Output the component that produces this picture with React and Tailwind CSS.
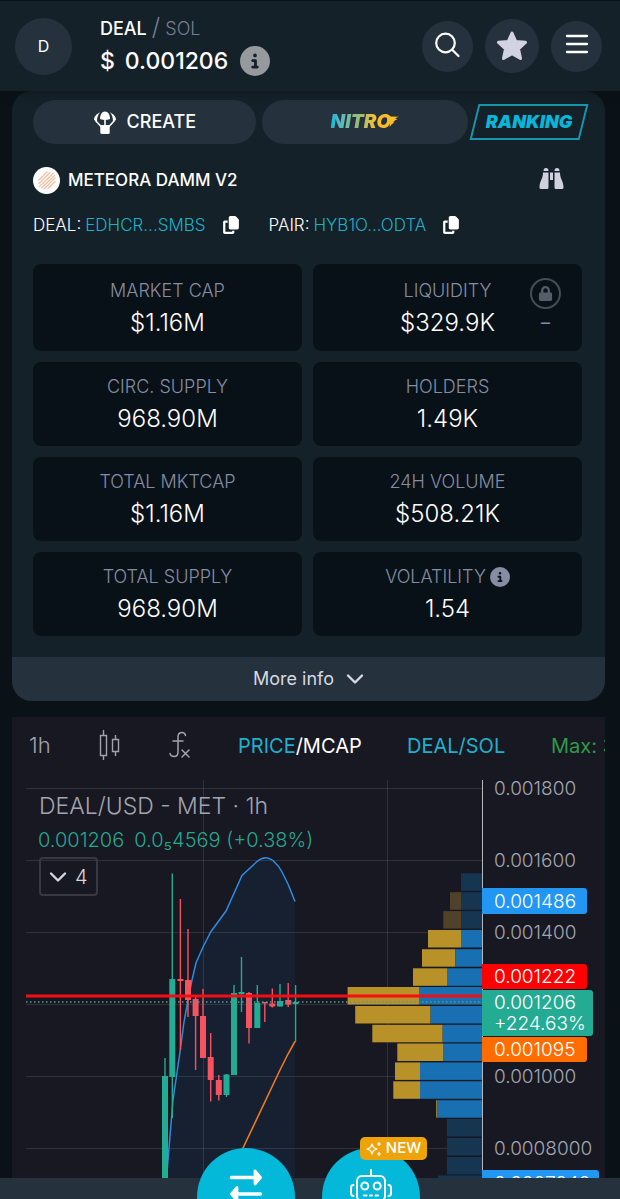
import React from "react";
import { FaLock } from "react-icons/fa";
import { FaCircleInfo, FaCopy } from "react-icons/fa6";

const STATS = [
  { label: "MARKET CAP", value: "$1.16M" },
  { label: "LIQUIDITY", value: "$329.9K", lock: true },
  { label: "CIRC. SUPPLY", value: "968.90M" },
  { label: "HOLDERS", value: "1.49K" },
  { label: "TOTAL MKTCAP", value: "$1.16M" },
  { label: "24H VOLUME", value: "$508.21K" },
  { label: "TOTAL SUPPLY", value: "968.90M" },
  { label: "VOLATILITY", value: "1.54", info: true },
];

// [x, wick top, wick bottom, body top, body bottom, rising]
const CANDLES = [
  [165, 1058, 1178, 1076, 1178, true],
  [172.3, 873.5, 1118, 979, 1077, true],
  [180.4, 899, 1050, 979, 981, false],
  [188, 929, 1017, 980, 1000, false],
  [195.6, 996, 1070, 999, 1016, false],
  [203, 989, 1058, 1016, 1058, false],
  [210.7, 1033, 1101.5, 1057, 1080, false],
  [218.8, 1075, 1100.5, 1080, 1095, false],
  [226.5, 1074, 1097, 1074.5, 1095, true],
  [234, 985, 1075, 993, 1075, true],
  [241.5, 957, 1012, 992, 994, true],
  [249, 992, 1043.5, 993, 1028, false],
  [257.3, 985, 1028, 1003, 1028, true],
  [264.8, 1002, 1022, 1002, 1003.5, false],
  [272.3, 988.5, 1007.5, 1003.5, 1006.5, false],
  [280, 984, 1006.5, 1001, 1006.5, true],
  [288.2, 983, 1007, 1000, 1004.5, false],
  [295.6, 985, 1042, 1002, 1004, true],
];

// [top, gold left, blue left, dimmed]
const PROFILE = [
  [873.3, 461, 461, true],
  [892.2, 450, 461, true],
  [911.1, 443.3, 461, true],
  [930, 428, 461, false],
  [949.2, 422, 455.3, false],
  [968.3, 413, 447, false],
  [987, 347.6, 419, false],
  [1006, 355.2, 430.6, false],
  [1024.8, 372.3, 442.7, false],
  [1043.5, 397.3, 443, false],
  [1062.4, 395, 420, false],
  [1081.3, 393.3, 420, false],
  [1100.2, 436.2, 437.5, false],
  [1119, 447, 447, true],
  [1138, 447, 447, true],
  [1157, 447, 447, true],
  [1175.5, 438, 438, true],
];

const GRID_Y = [788.5, 860.5, 932.5, 1004.5, 1076.5, 1148.5];
const AXIS = [
  [788, "0.001800"],
  [860, "0.001600"],
  [932, "0.001400"],
  [1076, "0.001000"],
  [1148, "0.0008000"],
];
const UPPER =
  "M166.500 1178L168 1160L173 1100L180 1052L184 1022L188 1000L192 980L196 963L203 947L211 931.500L226 911L242 875.500L257 861.500Q265 854.500 273 860.500Q279 866 282 872L288 884L295 901.500";

const GREEN = "#23ab94";
const RED = "#f7525f";

function Parachute() {
  return (
    <svg viewBox="0 0 24 24" className="h-6 w-6" fill="currentColor" aria-hidden="true">
      <path d="M7 9C7 4.500 9 1.500 12 1.500S17 4.500 17 9Q12 11 7 9Z" />
      <path d="M7.200 2.300C3.500 4 1 6.500 1 10L4 11.500C4 7.500 5 4.500 7.200 2.300ZM16.800 2.300C20.500 4 23 6.500 23 10L20 11.500C20 7.500 19 4.500 16.800 2.300Z" />
      <path d="M2.500 10.500L8.500 17M21.500 10.500L15.500 17M12 9.500V16" fill="none" stroke="currentColor" strokeWidth="1.600" />
      <rect x="7.300" y="15" width="9.400" height="9" rx="1.500" />
    </svg>
  );
}

function Chevron() {
  return (
    <svg viewBox="0 0 18 12" className="h-3 w-[18px]" fill="none" stroke="currentColor" strokeWidth="2.400" strokeLinecap="round" strokeLinejoin="round" aria-hidden="true">
      <path d="M2 2.500L9 9.500L16 2.500" />
    </svg>
  );
}

function Binoculars() {
  return (
    <svg viewBox="0 0 25 23" className="h-[23px] w-[25px]" fill="currentColor" aria-hidden="true">
      <path d="M4.500 4Q4.500 1 7 1Q9.500 1 9.500 4ZM15.500 4Q15.500 1 18 1Q20.500 1 20.500 4Z" />
      <path d="M4 5.500H9.500V20.500Q9.500 22 8 22H2Q.5 22 .5 20.500C.5 14 4 12 4 5.500ZM15.500 5.500H21C21 12 24.500 14 24.500 20.500Q24.500 22 23 22H17Q15.500 22 15.500 20.500ZM11 5.500H14V13H11Z" />
    </svg>
  );
}

function Header() {
  return (
    <header className="relative z-10 flex h-[91px] items-center border-t border-[#0b1219] bg-[#152129] pr-[18px] pl-[15px] shadow-[0_2px_8px_#0b121980]">
      <div className="flex h-[57px] w-[57px] shrink-0 items-center justify-center rounded-full bg-[#25323d] text-base">D</div>
      <div className="ml-7 flex-1">
        <div className="text-lg leading-7 font-light text-[#747e92]">
          <span className="font-medium text-white">DEAL</span> <span className="text-2xl leading-7">/</span> SOL
        </div>
        <div className="flex items-center text-[23px] leading-9 font-medium">
          <span className="mr-[10px]">$</span>0.001206
          <button type="button" aria-label="Price details" className="ml-3 text-[#96999e]">
            <FaCircleInfo className="h-[30px] w-[30px]" />
          </button>
        </div>
      </div>
      <div className="flex items-center gap-3">
        <button type="button" aria-label="Search" className="flex h-[51px] w-[51px] items-center justify-center rounded-full bg-[#25323d]">
          <svg viewBox="0 0 28 28" className="h-7 w-7" fill="none" stroke="currentColor" strokeWidth="2.200" strokeLinecap="round">
            <circle cx="11.500" cy="11" r="9.300" />
            <path d="M18.500 18L24.500 24" />
          </svg>
        </button>
        <button type="button" aria-label="Favourite" className="flex h-[54px] w-[54px] items-center justify-center rounded-full bg-[#25323d] text-[#d2d3e2]">
          <svg viewBox="0 0 32 32" className="h-8 w-8" fill="currentColor" stroke="currentColor" strokeWidth="3" strokeLinejoin="round">
            <path d="M16 3L19.800 11.500L29.500 12.300L22.500 18.800L24.500 28.500L16 23.800L7.500 28.500L9.500 18.800L2.500 12.300L12.200 11.500Z" />
          </svg>
        </button>
        <button type="button" aria-label="Menu" className="flex h-[51px] w-[51px] items-center justify-center rounded-full bg-[#25323d]">
          <svg viewBox="0 0 24 24" className="h-6 w-6" stroke="currentColor" strokeWidth="2.300" strokeLinecap="round">
            <path d="M2 2H22M2 10H22M2 18H22" />
          </svg>
        </button>
      </div>
    </header>
  );
}

function Address({ label, value }) {
  return (
    <div className="flex items-center">
      <span>{label}:</span>
      <a href="#address" className="ml-1 text-[#1cb0c7]">{value}</a>
      <button type="button" aria-label={`Copy ${label} address`} className="ml-4">
        <FaCopy className="h-[18px] w-[18px]" />
      </button>
    </div>
  );
}

function Stat({ label, value, lock, info }) {
  return (
    <div className="relative flex min-h-[84px] flex-col items-center justify-center rounded-lg bg-[#091118] pt-[2px]">
      <div className="flex items-center gap-1 text-lg leading-7 font-light text-[#858da2]">
        {label}
        {info && <FaCircleInfo className="h-5 w-5" />}
      </div>
      <div className="text-2xl leading-9 font-light">{value}</div>
      {lock && (
        <div className="absolute top-[14px] right-[21px] flex flex-col items-center text-[#555d69]">
          <span className="flex h-[31px] w-[31px] items-center justify-center rounded-full border-2 border-[#454d57]">
            <FaLock className="h-[15px] w-[15px]" />
          </span>
          <span className="text-lg leading-7 text-[#858da2]">–</span>
        </div>
      )}
    </div>
  );
}

function TokenCard() {
  return (
    <section className="mr-[15px] ml-3 overflow-hidden rounded-[20px] bg-[#152129]">
      <div className="pt-[9px] pr-[23px] pb-[21px] pl-[21px]">
        <div className="-mr-[6px] flex items-center">
          <button type="button" className="mr-[6px] flex h-11 flex-[223] items-center justify-center gap-[10px] rounded-full bg-[#25323d] text-lg font-medium">
            <Parachute /> CREATE
          </button>
          <button type="button" className="mr-[2px] flex h-11 flex-[207] items-center justify-center rounded-full bg-[#25323d]">
            <span className="bg-linear-to-r from-[#0bb5dc] via-[#9bbd70] via-45% to-[#f9bd27] to-70% bg-clip-text pr-1 text-[19px] font-black text-transparent italic">NITRO</span>
            <svg viewBox="0 0 16 16" className="-ml-3 h-4 w-4" fill="#f9bd27" aria-hidden="true">
              <path d="M2 1.500Q5 .5 8 2.500L16 2.800Q13.500 3.600 12 4.600L14.500 5Q11.500 6 10 8.500L11.500 8.600Q8.500 10 6.500 13Q8 7 5.500 4Q4.500 2.500 2 1.500Z" />
            </svg>
          </button>
          <button type="button" className="relative h-9 flex-[118] text-lg font-black text-[#08b6da] italic">
            <span className="absolute inset-y-0 right-1 left-1 -skew-x-[14deg] border-2 border-[#1795ad]" />
            <span className="relative">RANKING</span>
          </button>
        </div>

        <div className="mt-[23px] flex items-center text-[17px] leading-[27px] font-medium">
          <svg viewBox="0 0 27 27" className="mr-2 h-[27px] w-[27px]" aria-hidden="true">
            <circle cx="13.500" cy="13.500" r="13.500" fill="#fff" />
            <g stroke="#f6bd9c" strokeWidth="1.200" strokeLinecap="round">
              <path d="M6 13L14 5M6 16.500L17 5.500M6.500 19.500L20 6.500M8.500 21L21.500 8.500M11 22L22 11M15 21.500L22 14.500" />
            </g>
          </svg>
          METEORA DAMM V2
          <button type="button" aria-label="Watch pair" className="mr-[18px] ml-auto pb-1 text-[#cfd1df]">
            <Binoculars />
          </button>
        </div>

        <div className="mt-[17px] flex items-center gap-[29px] text-[17px] leading-7 font-light whitespace-nowrap">
          <Address label="DEAL" value="EDHCR...SMBS" />
          <Address label="PAIR" value="HYB1O...ODTA" />
        </div>

        <div className="mt-[25px] grid grid-cols-2 grid-rows-[87px_84px_84px_84px] gap-[11px]">
          {STATS.map((s) => (
            <Stat key={s.label} {...s} />
          ))}
        </div>
      </div>
      <button type="button" className="flex h-11 w-full items-center justify-center gap-3 bg-[#25323d] text-lg text-[#d5d9e2]">
        More info <Chevron />
      </button>
    </section>
  );
}

function PriceTag({ y, h, w = 105, fill }) {
  return <path d={`M482 ${y}h${w - 3}q3 0 3 3v${h - 6}q0 3 -3 3h${3 - w}z`} fill={fill} />;
}

function Plot() {
  return (
    <svg viewBox="12 780 593 398" className="block w-full" role="img" aria-label="DEAL/USD price chart">
      <path d={`${UPPER}V1178Z`} fill="#172030" />
      <g stroke="#fff" strokeOpacity="0.110">
        {GRID_Y.map((y) => (
          <path key={y} d={`M26 ${y}H482`} />
        ))}
        <path d="M203.500 780V1178M387.500 780V1178" />
      </g>
      {PROFILE.map(([y, gold, blue, dim]) => (
        <g key={y}>
          <rect x={gold} y={y} width={blue - gold} height="17.500" fill={dim ? "#4f4229" : "#b89128"} />
          <rect x={blue} y={y} width={482 - blue} height="17.500" fill={dim ? "#163550" : "#186fb1"} />
        </g>
      ))}
      <path d={UPPER} fill="none" stroke="#2f8be0" strokeWidth="1.500" />
      <path d="M295 1041.500L288 1054L280 1070L243 1148L229 1178" fill="none" stroke="#ee7a22" strokeWidth="1.600" />
      {CANDLES.map(([x, high, low, top, bottom, up]) => (
        <g key={x} fill={up ? GREEN : RED}>
          <rect x={x - 0.7} y={high} width="1.400" height={low - high} />
          <rect x={x - 3} y={top} width="6" height={bottom - top} />
        </g>
      ))}
      <path d="M26 1002H482" stroke="#5f968f" strokeWidth="1.300" strokeDasharray="1.500 2.500" />
      <path d="M26 996H482" stroke="#f50d13" strokeWidth="3" />
      <path d="M482.500 780V1178" stroke="#b4b7c0" />
      <PriceTag y={888} h={26} fill="#2196f3" />
      <PriceTag y={964} h={25} fill="#ff0000" />
      <PriceTag y={1037} h={25} fill="#ff6d00" />
      <PriceTag y={990} h={46} w={111} fill={GREEN} />
      <PriceTag y={1170} h={26} w={117} fill="#2196f3" />
      <g className="text-[19px] font-light" fill="#a3a5b0">
        {AXIS.map(([y, t]) => (
          <text key={t} x="494" y={y + 7}>{t}</text>
        ))}
      </g>
      <g className="text-[19px] font-light" fill="#fff">
        <text x="494" y="908">0.001486</text>
        <text x="494" y="983">0.001222</text>
        <text x="494" y="1009">0.001206</text>
        <text x="494" y="1030">+224.63%</text>
        <text x="494" y="1056">0.001095</text>
        <text x="494" y="1190">0.0007942</text>
      </g>
    </svg>
  );
}

function ChartPanel() {
  return (
    <section className="mt-4 mr-[15px] ml-3 overflow-hidden bg-[#171822]">
      <div className="flex h-[63px] items-center overflow-hidden pl-[17px] text-xl whitespace-nowrap">
        <button type="button" className="w-[70px] shrink-0 pb-[6px] text-left text-[22px] font-light text-[#a1a3ad]">1h</button>
        <button type="button" aria-label="Chart type" className="w-[70px] shrink-0 pb-2 text-[#a1a3ad]">
          <svg viewBox="0 0 22 30" className="h-[30px] w-[22px]" fill="none" stroke="currentColor" strokeWidth="1.400">
            <path d="M1.500 5.500H7.500V25.500H1.500ZM4.500 0V5.500M4.500 25.500V30M13.500 9.500H19.500V21.500H13.500ZM16.500 5V9.500M16.500 21.500V26" />
          </svg>
        </button>
        <button type="button" aria-label="Indicators" className="w-[69px] shrink-0 pb-2 text-[#a1a3ad]">
          <svg viewBox="0 0 22 28" className="h-7 w-[22px]" fill="none" stroke="currentColor" strokeWidth="1.500" strokeLinecap="round">
            <path d="M16.500 4.500Q16 1.500 13 1.500Q9 1.500 9 6V21Q9 25.500 5 25.500Q1.500 25.500 1 22.500M4 10H14M13 19L20 26M20 19L13 26" />
          </svg>
        </button>
        <button type="button" className="w-[169px] shrink-0 pb-[6px] text-left text-white"><span className="text-[#1eb0cc]">PRICE</span>/MCAP</button>
        <button type="button" className="w-36 shrink-0 pb-[6px] text-left text-[#1eb0cc]">DEAL/SOL</button>
        <span className="pb-[6px] text-[#2f9a48]">Max: 3</span>
      </div>
      <div className="relative">
        <Plot />
        <div className="absolute top-2 left-[26px]">
          <div className="pl-px text-[23px] leading-9 font-light text-[#a3a5b0]">DEAL/USD - MET · 1h</div>
          <div className="flex gap-[10px] text-xl leading-8 font-light text-[#27a68f]">
            <span>0.001206</span>
            <span>0.0₅4569 (+0.38%)</span>
          </div>
          <button type="button" aria-label="Show 4 indicators" className="mt-px ml-px flex h-[39px] items-center gap-2 rounded border-2 border-[#363843] px-2 text-xl font-light text-[#d5d7df]">
            <Chevron /> 4
          </button>
        </div>
      </div>
    </section>
  );
}

function BottomBar() {
  return (
    <nav className="relative z-10 flex h-[21px] items-start justify-center gap-[27px] bg-[#25323d] pr-[3px]">
      <button type="button" aria-label="Swap" className="-mt-[30px] flex h-[98px] w-[98px] shrink-0 justify-center rounded-full bg-[#04b8da] pt-5">
        <svg viewBox="0 0 34 34" className="h-[34px] w-[34px]" fill="#fff" stroke="#fff" strokeWidth="3.600" strokeLinecap="round" strokeLinejoin="round">
          <path d="M2.500 9.500H25M31.500 26H9" />
          <path d="M26 3L31.500 9.500L26 16ZM8 19.500L2.500 26L8 32.500Z" strokeWidth="2.800" />
        </svg>
      </button>
      <div className="relative -mt-[30px] shrink-0">
        <button type="button" aria-label="Trading bot" className="flex h-[98px] w-[98px] justify-center rounded-full bg-[#04b8da] pt-5">
          <svg viewBox="0 0 42 42" className="h-[42px] w-[42px]" fill="none" stroke="#fff" strokeWidth="2" strokeLinecap="round">
            <path d="M21 2V8" />
            <rect x="7" y="8" width="28" height="25" rx="5" />
            <circle cx="14.800" cy="18" r="3.500" />
            <circle cx="27.200" cy="18" r="3.500" />
            <path d="M14 27.500H16.500M20 27.500H22M25.500 27.500H28M3.500 17Q1 17 1 20V25Q1 28 3.500 28M38.500 17Q41 17 41 20V25Q41 28 38.500 28" />
          </svg>
        </button>
        <span className="absolute -top-[11px] left-[38px] flex h-[23px] w-[67px] items-center justify-center gap-1 rounded-[5px] bg-[#efa30b] text-[15px] font-medium text-white">
          <svg viewBox="0 0 16 16" className="h-4 w-4" fill="none" stroke="#fff" strokeWidth="1.200" strokeLinejoin="round">
            <path d="M6 3L7.500 6.500L11 8L7.500 9.500L6 13L4.500 9.500L1 8L4.500 6.500ZM13 1V5M11 3H15M13 11V15M11 13H15" />
          </svg>
          NEW
        </span>
      </div>
    </nav>
  );
}

export default function App() {
  return (
    <div className="min-h-screen overflow-hidden bg-[#0a1117] font-['Inter','Liberation_Sans',sans-serif] text-white">
      <Header />
      <main>
        <TokenCard />
        <ChartPanel />
      </main>
      <BottomBar />
    </div>
  );
}
